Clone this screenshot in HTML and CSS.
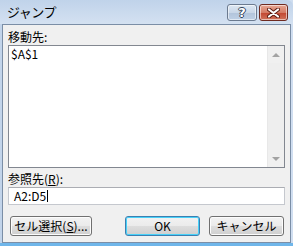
FILE: index.html
```html
<!DOCTYPE html>
<html lang="ja">
<head>
    <meta charset="UTF-8">
    <title>ジャンプ</title>
    <link rel="stylesheet" href="styles.css">
</head>
<body>
    <div class="window">
        <div class="titlebar">
            <span class="title">ジャンプ</span>
            <div class="caption-buttons">
                <button class="cap help">?</button>
                <button class="cap close">
                    <svg width="13" height="10" viewBox="0 0 13 10">
                        <path d="M2 1.5 L11 8.5 M11 1.5 L2 8.5" stroke="#5a1a10" stroke-width="4" stroke-linecap="round"/>
                        <path d="M2 1.5 L11 8.5 M11 1.5 L2 8.5" stroke="#ffffff" stroke-width="2.2" stroke-linecap="round"/>
                    </svg>
                </button>
            </div>
        </div>
        <div class="client">
            <div class="field-label">移動先:</div>
            <div class="listbox">
                <div class="list-items">
                    <div class="list-item">$A$1</div>
                </div>
                <div class="scrollbar">
                    <div class="scroll-btn"><span class="arrow up"></span></div>
                    <div class="scroll-track"></div>
                    <div class="scroll-btn"><span class="arrow down"></span></div>
                </div>
            </div>
            <div class="field-label ref">参照先(<u>R</u>):</div>
            <div class="textbox">A2:D5<span class="caret"></span></div>
            <div class="actions">
                <button class="btn wide">セル選択(<u>S</u>)...</button>
                <div class="spacer"></div>
                <button class="btn default">OK</button>
                <button class="btn">キャンセル</button>
            </div>
        </div>
        <div class="frame-bottom"></div>
    </div>
</body>
</html>
```

FILE: styles.css
```css
* {
    margin: 0;
    padding: 0;
    box-sizing: border-box;
}

body {
    font-family: "Noto Sans CJK JP", "Noto Sans", sans-serif;
    font-size: 12px;
    color: #000000;
    background: #c9d9ec;
}

.window {
    width: 293px;
    height: 246px;
    display: flex;
    flex-direction: column;
    background: linear-gradient(to right, #c2d4ea, #d0def0);
}

/* title bar */
.titlebar {
    height: 24px;
    display: flex;
    align-items: flex-start;
    padding-left: 7px;
    background: linear-gradient(to bottom, #c0d3ea, #d4e1f1);
    border-top-right-radius: 6px;
}

.title {
    font-size: 13px;
    line-height: 23px;
    letter-spacing: -0.5px;
}

.caption-buttons {
    margin-left: auto;
    margin-top: 4px;
    margin-right: 5px;
    display: flex;
    gap: 2px;
}

.cap {
    width: 30px;
    height: 17px;
    border: 1px solid #6b7a8f;
    border-radius: 3px;
    display: flex;
    align-items: center;
    justify-content: center;
    box-shadow: inset 0 0 0 1px rgba(255, 255, 255, 0.55);
}

.help {
    background: linear-gradient(to bottom, #dde7f3 0%, #c9d7e8 50%, #b2c4db 51%, #bed0e6 100%);
    color: #ffffff;
    font-family: "DejaVu Sans", sans-serif;
    font-weight: bold;
    font-size: 13px;
    line-height: 1;
    text-shadow: 1px 0 0 #35455c, -1px 0 0 #35455c, 0 1px 0 #35455c, 0 -1px 0 #35455c;
}

.close {
    width: 29px;
    border-color: #6e2a20;
    background: linear-gradient(to bottom, #e8a895 0%, #d47b65 50%, #c2452f 51%, #d0735b 100%);
}

/* client area */
.client {
    height: 219px;
    margin: 0 2px 0 2px;
    background: #f0f0f0;
    border: 1px solid #7b8ea6;
    padding: 4px 5px 0 5px;
}

.field-label {
    height: 16px;
    line-height: 16px;
    padding-left: 0;
}

.field-label.ref {
    margin-top: 3px;
}

.listbox {
    height: 123px;
    display: flex;
    background: #ffffff;
    border: 1px solid #828790;
}

.list-items {
    flex: 1;
    padding: 1px 2px;
}

.list-item {
    line-height: 14px;
}

.scrollbar {
    width: 17px;
    display: flex;
    flex-direction: column;
    background: #f0f0f0;
    border-left: 1px solid #e8e8e8;
}

.scroll-btn {
    height: 17px;
    display: flex;
    align-items: center;
    justify-content: center;
}

.scroll-track {
    flex: 1;
    background: #eeeeee;
}

.arrow {
    width: 0;
    height: 0;
    border-left: 4px solid transparent;
    border-right: 4px solid transparent;
}

.arrow.up {
    border-bottom: 4px solid #a3a3a3;
}

.arrow.down {
    border-top: 4px solid #a3a3a3;
}

.textbox {
    height: 18px;
    background: #ffffff;
    border: 1px solid #c5c8ce;
    border-top-color: #abadb3;
    padding-left: 5px;
    line-height: 16px;
    display: flex;
    align-items: center;
}

.caret {
    width: 1px;
    height: 12px;
    background: #000000;
    margin-left: 1px;
}

/* buttons */
.actions {
    margin-top: 11px;
    display: flex;
    gap: 9px;
    padding: 0 1px 0 2px;
}

.spacer {
    flex: 1;
}

.btn {
    width: 75px;
    height: 20px;
    font-family: inherit;
    font-size: 12px;
    color: #000000;
    border: 1px solid #707070;
    border-radius: 3px;
    background: linear-gradient(to bottom, #f2f2f2 0%, #ebebeb 50%, #dddddd 51%, #cfcfcf 100%);
    box-shadow: inset 0 0 0 1px #fcfcfc;
    line-height: 16px;
}

.btn.wide {
    width: 82px;
}

.btn.default {
    border-color: #3c7fb1;
    box-shadow: inset 0 0 0 1px #48d1f8;
}

u {
    text-decoration: underline;
    text-underline-offset: 1px;
}

.frame-bottom {
    height: 3px;
    background: #6fb6ea;
}
```
